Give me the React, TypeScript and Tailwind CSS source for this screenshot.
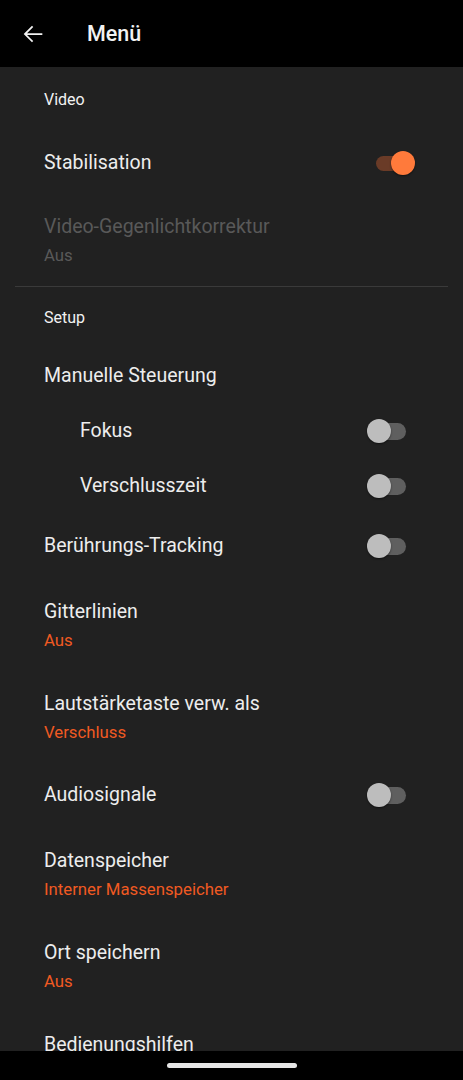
import React from 'react'

// ─── Types ───────────────────────────────────────────────────────────────────
type Row =
  | { kind: 'category'; title: string; h: string }
  | { kind: 'switch'; title: string; on?: boolean; indent?: boolean; h: string }
  | { kind: 'plain'; title: string; indent?: boolean; h: string }
  | { kind: 'summary'; title: string; summary: string; disabled?: boolean }
  | { kind: 'divider' }

const ROWS: Row[] = [
  { kind: 'category', title: 'Video', h: 'h-[65px]' },
  { kind: 'switch', title: 'Stabilisation', on: true, h: 'h-[61px]' },
  { kind: 'summary', title: 'Video-Gegenlichtkorrektur', summary: 'Aus', disabled: true },
  { kind: 'divider' },
  { kind: 'category', title: 'Setup', h: 'h-[61px]' },
  { kind: 'plain', title: 'Manuelle Steuerung', h: 'h-[55px]' },
  { kind: 'switch', title: 'Fokus', indent: true, h: 'h-[56px]' },
  { kind: 'switch', title: 'Verschlusszeit', indent: true, h: 'h-[54px]' },
  { kind: 'switch', title: 'Berührungs-Tracking', h: 'h-[65px]' },
  { kind: 'summary', title: 'Gitterlinien', summary: 'Aus' },
  { kind: 'summary', title: 'Lautstärketaste verw. als', summary: 'Verschluss' },
  { kind: 'switch', title: 'Audiosignale', h: 'h-[65px]' },
  { kind: 'summary', title: 'Datenspeicher', summary: 'Interner Massenspeicher' },
  { kind: 'summary', title: 'Ort speichern', summary: 'Aus' },
  { kind: 'summary', title: 'Bedienungshilfen', summary: '' },
]

// ─── Sub-components ──────────────────────────────────────────────────────────
const BackArrow: React.FC = () => (
  <svg width="28" height="28" viewBox="0 0 24 24" fill="#f2f2f2" aria-hidden>
    <path d="M20 11.25H6.9l5.3-5.3-1.06-1.06L4.03 12l7.1 7.1 1.06-1.05-5.3-5.3H20z" />
  </svg>
)

const Switch: React.FC<{ on?: boolean }> = ({ on }) => (
  <div className="relative h-[24px] w-[48px] shrink-0">
    {on ? (
      <>
        <div className="absolute left-[9px] top-[5px] h-[15px] w-[33px] rounded-full bg-[#6a3b27]" />
        <div className="absolute left-[24px] top-0 h-[24px] w-[24px] rounded-full bg-[#ff7a3b] shadow-[0_1px_2px_rgba(0,0,0,0.5)]" />
      </>
    ) : (
      <>
        <div className="absolute left-[3px] top-[4px] h-[17px] w-[36px] rounded-full bg-[#5f5f5f]" />
        <div className="absolute left-0 top-0 h-[24px] w-[24px] rounded-full bg-[#bdbdbd] shadow-[0_1px_2px_rgba(0,0,0,0.5)]" />
      </>
    )}
  </div>
)

const SettingRow: React.FC<{ row: Row }> = ({ row }) => {
  if (row.kind === 'divider') {
    return <div className="mx-[15px] h-px shrink-0 bg-[#3a3a3a]" />
  }
  if (row.kind === 'category') {
    return (
      <div className={`${row.h} flex shrink-0 items-center pl-[44px] text-[16px] text-[#f2f2f2]`}>
        {row.title}
      </div>
    )
  }
  if (row.kind === 'summary') {
    return (
      <div className={`flex shrink-0 flex-col pl-[44px] pt-[22px] ${row.disabled ? 'pb-[21px]' : 'pb-[20px]'}`}>
        <span className={`text-[19.5px] leading-[24px] ${row.disabled ? 'text-[#595959]' : 'text-[#ededed]'}`}>
          {row.title}
        </span>
        <span className={`mt-[6px] text-[16.75px] leading-[20px] ${row.disabled ? 'text-[#595959]' : 'text-[#f05a22]'}`}>
          {row.summary}
        </span>
      </div>
    )
  }
  return (
    <div className={`${row.h} flex shrink-0 items-center justify-between ${row.indent ? 'pl-[80px]' : 'pl-[44px]'} pr-[48px]`}>
      <span className="text-[19.5px] leading-[24px] text-[#ededed]">{row.title}</span>
      {row.kind === 'switch' && <Switch on={row.on} />}
    </div>
  )
}

// ─── Main Component ──────────────────────────────────────────────────────────
const App: React.FC = () => (
  <div
    className="flex h-[1080px] w-full flex-col overflow-hidden bg-[#212121]"
    style={{ fontFamily: 'Roboto, "Noto Sans", sans-serif' }}
  >
    {/* Toolbar */}
    <div className="flex h-[67px] shrink-0 items-center bg-black pl-[19px]">
      <BackArrow />
      <span className="ml-[40px] pt-[2px] text-[21.5px] font-medium text-[#f2f2f2]">Menü</span>
    </div>

    {/* Preference list */}
    <div className="flex flex-1 flex-col overflow-hidden">
      {ROWS.map((row, i) => (
        <SettingRow key={i} row={row} />
      ))}
    </div>

    {/* Gesture nav bar */}
    <div className="flex h-[29px] shrink-0 items-center justify-center bg-black">
      <div className="h-[5px] w-[130px] rounded-full bg-[#e6e6e6]" />
    </div>
  </div>
)

export default App
